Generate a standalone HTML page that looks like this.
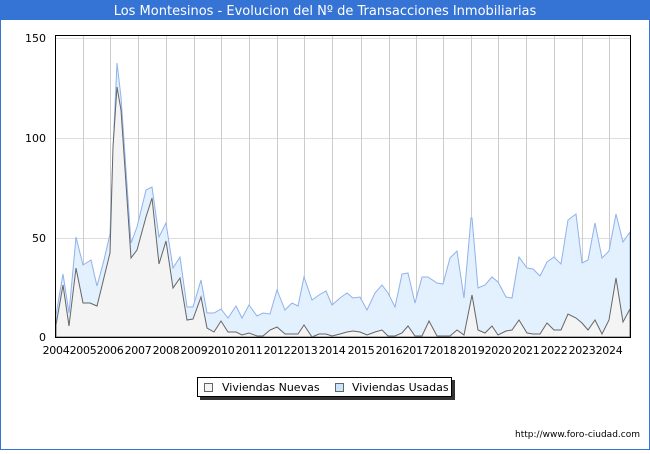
<!DOCTYPE html>
<html><head><meta charset="utf-8"><style>
html,body{margin:0;padding:0;background:#fff}
body{width:650px;height:450px;overflow:hidden;font-family:"DejaVu Sans","Liberation Sans",sans-serif}
</style></head><body>
<svg width="650" height="450" xmlns="http://www.w3.org/2000/svg" font-family="DejaVu Sans, Liberation Sans, sans-serif">
<rect x="0.5" y="0.5" width="649" height="449" fill="#fff" stroke="#3574d4"/>
<rect x="0" y="0" width="650" height="20" fill="#3574d4"/>
<text x="325" y="15" text-anchor="middle" font-size="13" fill="#fff">Los Montesinos - Evolucion del Nº de Transacciones Inmobiliarias</text>
<g stroke="#ddd" stroke-width="1">
<line x1="56" y1="38.5" x2="630" y2="38.5"/><line x1="56" y1="138.5" x2="630" y2="138.5"/><line x1="56" y1="238.5" x2="630" y2="238.5"/>
</g>
<g stroke="#ccc" stroke-width="1">
<line x1="83.5" y1="36" x2="83.5" y2="337"/><line x1="110.5" y1="36" x2="110.5" y2="337"/><line x1="138.5" y1="36" x2="138.5" y2="337"/><line x1="166.5" y1="36" x2="166.5" y2="337"/><line x1="194.5" y1="36" x2="194.5" y2="337"/><line x1="221.5" y1="36" x2="221.5" y2="337"/><line x1="249.5" y1="36" x2="249.5" y2="337"/><line x1="277.5" y1="36" x2="277.5" y2="337"/><line x1="304.5" y1="36" x2="304.5" y2="337"/><line x1="332.5" y1="36" x2="332.5" y2="337"/><line x1="361.5" y1="36" x2="361.5" y2="337"/><line x1="389.5" y1="36" x2="389.5" y2="337"/><line x1="416.5" y1="36" x2="416.5" y2="337"/><line x1="443.5" y1="36" x2="443.5" y2="337"/><line x1="471.5" y1="36" x2="471.5" y2="337"/><line x1="498.5" y1="36" x2="498.5" y2="337"/><line x1="526.5" y1="36" x2="526.5" y2="337"/><line x1="554.5" y1="36" x2="554.5" y2="337"/><line x1="582.5" y1="36" x2="582.5" y2="337"/><line x1="609.5" y1="36" x2="609.5" y2="337"/>
</g>
<polygon fill="#e3f0fd" stroke="#8fb2ec" stroke-width="1" points="56,337 56,315 63,274 69,313 76,237 83,265 91,260 97,286 104,260 110,234 114,127 117,63 121,97 131,243 137,227 146,190 152,187 159,237 166,223 173,268 180,257 187,307 193,307 201,280 207,313 214,313 221,309 228,318 236,306 242,318 249,305 257,316 263,313 270,314 277,290 285,310 292,303 298,306 304,277 312,300 319,295 326,291 332,305 340,298 347,293 353,298 360,297 367,310 375,293 382,285 388,293 395,307 402,274 408,273 415,303 422,277 428,277 437,283 443,284 450,258 457,251 464,298 471,218 472,218 478,288 485,285 492,277 498,282 506,297 512,298 519,257 527,268 533,269 540,276 547,262 554,257 561,264 568,220 576,214 582,263 588,260 595,223 602,258 609,251 616,214 623,242 630,232 630,337"/>
<polygon fill="#f4f4f4" stroke="#666" stroke-width="1" points="56,337 56,325 63,285 69,326 76,268 83,303 90,303 97,306 110,253 113,147 117,87 121,110 131,258 137,250 146,217 152,198 159,264 166,241 173,288 180,278 187,320 193,319 201,297 207,328 214,332 221,321 228,332 236,332 242,335 249,333 257,336 263,336 270,330 277,327 285,334 298,334 304,325 312,337 319,334 326,334 332,336 340,334 347,332 353,331 360,332 367,335 375,332 382,330 388,336 395,336 402,333 408,326 415,336 422,336 429,321 437,336 450,336 457,330 464,335 472,295 478,330 485,333 492,326 498,335 506,331 512,330 519,320 527,333 533,334 540,334 547,323 554,330 561,330 568,314 576,318 582,323 588,330 595,320 602,334 609,320 616,278 623,322 630,309 630,337"/>
<rect x="55.5" y="35.5" width="575" height="302" fill="none" stroke="#000"/>
<g font-size="11" fill="#000" text-anchor="end">
<text x="46" y="42">150</text><text x="46" y="142">100</text><text x="46" y="242">50</text><text x="46" y="341">0</text>
</g>
<g font-size="11" fill="#000" text-anchor="middle" letter-spacing="-0.3">
<text x="56" y="354">2004</text><text x="83" y="354">2005</text><text x="110" y="354">2006</text><text x="138" y="354">2007</text><text x="166" y="354">2008</text><text x="194" y="354">2009</text><text x="221" y="354">2010</text><text x="249" y="354">2011</text><text x="277" y="354">2012</text><text x="304" y="354">2013</text><text x="332" y="354">2014</text><text x="361" y="354">2015</text><text x="389" y="354">2016</text><text x="416" y="354">2017</text><text x="443" y="354">2018</text><text x="471" y="354">2019</text><text x="498" y="354">2020</text><text x="526" y="354">2021</text><text x="554" y="354">2022</text><text x="582" y="354">2023</text><text x="609" y="354">2024</text>
</g>
<rect x="200" y="380" width="255" height="20" fill="#333"/>
<rect x="197.5" y="377.5" width="254" height="19" fill="#fff" stroke="#000"/>
<rect x="204.5" y="383.5" width="8" height="8" fill="#f4f4f4" stroke="#666"/>
<text x="222" y="391" font-size="11">Viviendas Nuevas</text>
<rect x="335.5" y="383.5" width="8" height="8" fill="#cce4fb" stroke="#666"/>
<text x="352" y="391" font-size="11">Viviendas Usadas</text>
<text x="640" y="437" font-size="9" text-anchor="end">http://www.foro-ciudad.com</text>
</svg>
</body></html>
